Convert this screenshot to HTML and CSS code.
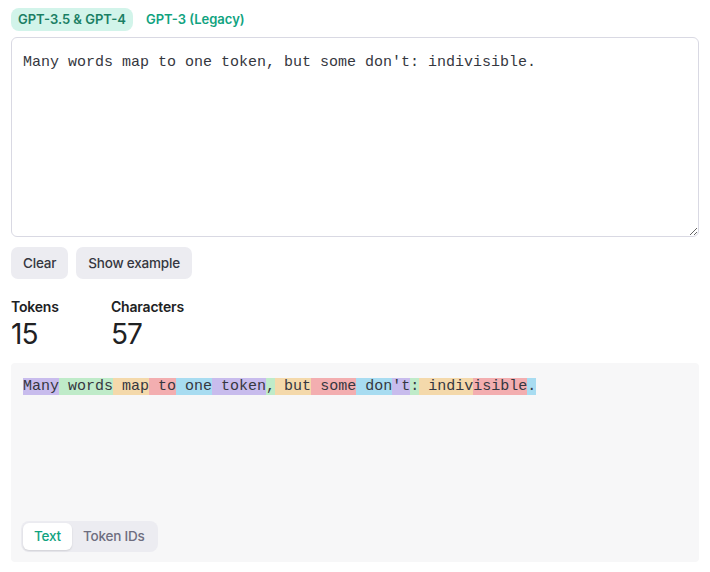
FILE: index.html
```html
<!DOCTYPE html>
<html>
<head>
<meta charset="utf-8">
<link rel="stylesheet" href="styles.css">
</head>
<body>
<div class="page">
  <div class="tabs">
    <span class="tab active">GPT-3.5 &amp; GPT-4</span>
    <span class="tab">GPT-3 (Legacy)</span>
  </div>
  <textarea class="input">Many words map to one token, but some don't: indivisible.</textarea>
  <div class="actions">
    <button class="btn">Clear</button>
    <button class="btn">Show example</button>
  </div>
  <div class="stats">
    <div class="stat"><div class="label">Tokens</div><div class="value">15</div></div>
    <div class="stat"><div class="label">Characters</div><div class="value">57</div></div>
  </div>
  <div class="output">
    <div class="tokens"><span class="t0">Many</span><span class="t1"> words</span><span class="t2"> map</span><span class="t3"> to</span><span class="t4"> one</span><span class="t0"> token</span><span class="t1">,</span><span class="t2"> but</span><span class="t3"> some</span><span class="t4"> don</span><span class="t0">'t</span><span class="t1">:</span><span class="t2"> indiv</span><span class="t3">isible</span><span class="t4">.</span></div>
    <div class="seg">
      <span class="seg-item on">Text</span>
      <span class="seg-item">Token IDs</span>
    </div>
  </div>
</div>
</body>
</html>
```
FILE: styles.css
```css
* { box-sizing: border-box; }
body {
  margin: 0;
  font-family: Inter, "Noto Sans", sans-serif;
  color: #202123;
  background: #fff;
}
.page {
  padding: 8px 11px 0 11px;
  display: flex;
  flex-direction: column;
}
.tabs {
  display: flex;
  gap: 6px;
  height: 23px;
  align-items: center;
}
.tab {
  font-size: 13px;
  font-weight: 600;
  color: #10a37f;
  padding: 0 7px;
  height: 23px;
  line-height: 23px;
  border-radius: 8px;
  letter-spacing: 0;
}
.tab.active {
  background: #d2f4ea;
  color: #1a7f64;
}
.input {
  margin-top: 6px;
  width: 688px;
  height: 200px;
  border: 1px solid #d9d9e3;
  border-radius: 6px;
  padding: 14px 11px;
  font-family: "Liberation Mono", monospace;
  font-size: 15px;
  line-height: 22px;
  color: #353740;
  resize: vertical;
  outline: none;
}
.actions {
  display: flex;
  gap: 8px;
  margin-top: 10px;
}
.btn {
  height: 32px;
  border: none;
  border-radius: 7px;
  background: #ececf1;
  color: #353740;
  font-family: Inter, "Noto Sans", sans-serif;
  font-size: 13.5px;
  font-weight: 500;
  padding: 0 12px;
  letter-spacing: -0.2px;
}
.stats {
  display: flex;
  margin-top: 19px;
}
.stat { width: 100px; }
.label {
  font-size: 14px;
  font-weight: 600;
  line-height: 18px;
  color: #202123;
  letter-spacing: -0.2px;
}
.value {
  font-size: 28px;
  line-height: 36px;
  font-weight: 400;
  color: #202123;
  letter-spacing: -1px;
}
.output {
  margin-top: 11px;
  width: 688px;
  height: 199px;
  background: #f7f7f8;
  border-radius: 4px;
  padding: 15px 12px 10px 12px;
  display: flex;
  flex-direction: column;
  justify-content: space-between;
}
.tokens {
  font-family: "Liberation Mono", monospace;
  font-size: 15px;
  line-height: 17px;
  color: #353740;
  white-space: pre-wrap;
}
.t0 { background: #c8bced; }
.t1 { background: #bfebc9; }
.t2 { background: #f4d9ab; }
.t3 { background: #f3aeb0; }
.t4 { background: #a8dcf1; }
.seg {
  align-self: flex-start;
  margin-left: -2px;
  display: flex;
  background: #ececf1;
  border-radius: 8px;
  padding: 2px;
  height: 31px;
}
.seg-item {
  font-size: 13.5px;
  font-weight: 500;
  color: #6e6e80;
  padding: 0 11px;
  line-height: 27px;
  border-radius: 6px;
  letter-spacing: -0.2px;
}
.seg-item.on {
  background: #fff;
  color: #10a37f;
  box-shadow: 0 1px 2px rgba(0,0,0,0.12);
}
```
